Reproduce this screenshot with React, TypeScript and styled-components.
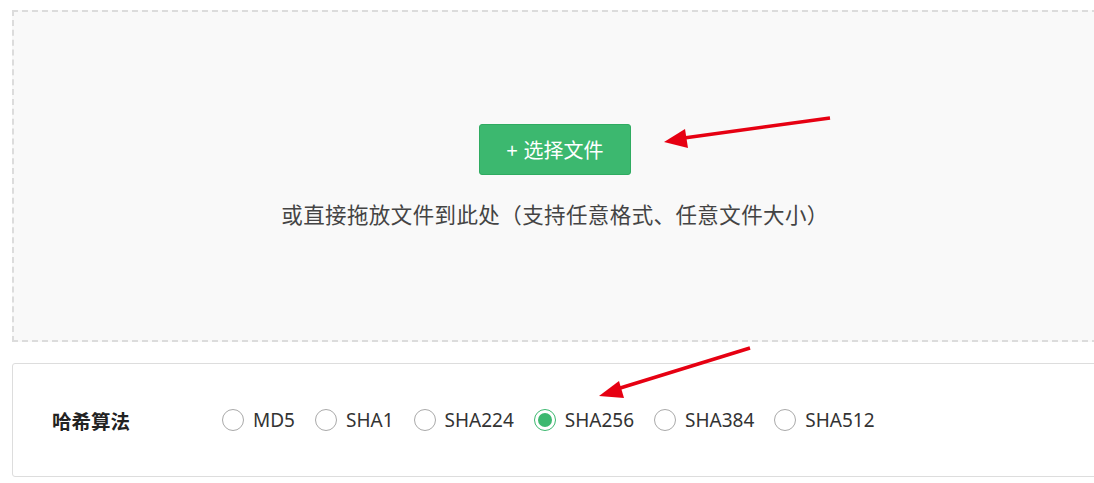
import React from "react";
import styled, { createGlobalStyle } from "styled-components";

const GlobalStyle = createGlobalStyle`
  html, body {
    margin: 0;
    padding: 0;
    background: #ffffff;
    overflow: hidden;
  }
  body {
    font-family: "Noto Sans", "Noto Sans CJK SC", sans-serif;
    color: #333;
  }
`;

const Page = styled.div`
  position: relative;
  width: 1094px;
  height: 483px;
  overflow: hidden;
  padding: 10px 0 0 12px;
  box-sizing: border-box;
  display: flex;
  flex-direction: column;
  gap: 21px;
`;

const DropZone = styled.div`
  width: 1086px;
  height: 332px;
  box-sizing: border-box;
  border: 2px dashed #dcdcdc;
  background: #f9f9f9;
  display: flex;
  flex-direction: column;
  align-items: center;
  justify-content: center;
  flex-shrink: 0;
`;

const UploadButton = styled.button`
  width: 152px;
  height: 51px;
  box-sizing: border-box;
  background: #3cb86f;
  border: 1px solid #2fab61;
  border-radius: 3px;
  color: #ffffff;
  font-family: "Noto Sans CJK SC", sans-serif;
  font-size: 20px;
  cursor: pointer;
  display: flex;
  align-items: center;
  justify-content: center;
  gap: 6px;
  padding: 0;
`;

const Hint = styled.p`
  margin: 24px 0 0;
  font-family: "Noto Sans CJK SC", sans-serif;
  font-size: 21.5px;
  letter-spacing: 0.4px;
  line-height: 30px;
  color: #444;
`;

const Card = styled.div`
  width: 1086px;
  height: 114px;
  box-sizing: border-box;
  border: 1px solid #dddddd;
  border-radius: 3px;
  background: #fff;
  display: flex;
  align-items: center;
  padding-left: 39px;
  flex-shrink: 0;
`;

const FieldLabel = styled.div`
  width: 170px;
  font-family: "Noto Sans CJK SC", sans-serif;
  font-weight: 700;
  font-size: 19.5px;
  color: #222;
`;

const RadioGroup = styled.div`
  display: flex;
  align-items: center;
  gap: 20px;
`;

const RadioItem = styled.label`
  display: flex;
  align-items: center;
  gap: 9px;
  cursor: pointer;
`;

const RadioCircle = styled.span<{ $checked: boolean }>`
  width: 22px;
  height: 22px;
  box-sizing: border-box;
  border-radius: 50%;
  border: 1px solid ${(p) => (p.$checked ? "#3cb86f" : "#a9a9a9")};
  background: #fff;
  display: flex;
  align-items: center;
  justify-content: center;
  &::after {
    content: "";
    width: 14px;
    height: 14px;
    border-radius: 50%;
    background: ${(p) => (p.$checked ? "#3cb86f" : "transparent")};
  }
`;

const RadioText = styled.span`
  font-family: "Noto Sans", sans-serif;
  font-size: 19px;
  color: #333;
`;

const Annotations = styled.svg`
  position: absolute;
  left: 0;
  top: 0;
  pointer-events: none;
`;

const algorithms = ["MD5", "SHA1", "SHA224", "SHA256", "SHA384", "SHA512"];

export default function App() {
  return (
    <>
      <GlobalStyle />
      <Page>
        <DropZone>
          <UploadButton>
            <span>+</span>
            <span>选择文件</span>
          </UploadButton>
          <Hint>或直接拖放文件到此处（支持任意格式、任意文件大小）</Hint>
        </DropZone>
        <Card>
          <FieldLabel>哈希算法</FieldLabel>
          <RadioGroup>
            {algorithms.map((a) => (
              <RadioItem key={a}>
                <RadioCircle $checked={a === "SHA256"} />
                <RadioText>{a}</RadioText>
              </RadioItem>
            ))}
          </RadioGroup>
        </Card>
        <Annotations width="1094" height="483" viewBox="0 0 1094 483">
          <line x1="830" y1="118" x2="684" y2="138" stroke="#e60012" strokeWidth="3.5" />
          <polygon points="664,142 685,129 688,148" fill="#e60012" />
          <line x1="750" y1="348" x2="617" y2="389" stroke="#e60012" strokeWidth="3.5" />
          <polygon points="599,396 619,381 624,398" fill="#e60012" />
        </Annotations>
      </Page>
    </>
  );
}
